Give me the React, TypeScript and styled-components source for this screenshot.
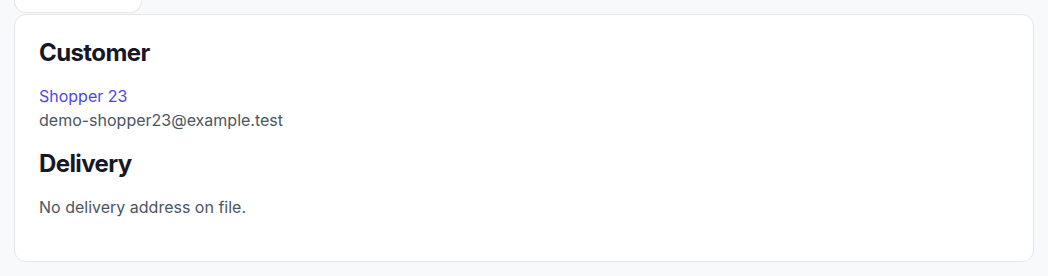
import styled, { createGlobalStyle } from 'styled-components';

const GlobalStyle = createGlobalStyle`
  html, body {
    margin: 0;
    padding: 0;
    background: #f8f9fb;
    font-family: Inter, 'Noto Sans', sans-serif;
    -webkit-font-smoothing: antialiased;
  }
`;

const StyledPage = styled.div`
  display: flex;
  flex-direction: column;
  gap: 1px;
  padding: 0 14px;
`;

const StyledStub = styled.div`
  width: 128px;
  height: 13px;
  box-sizing: border-box;
  background: #ffffff;
  border: 1px solid #e5e7eb;
  border-top: none;
  border-radius: 0 0 12px 12px;
`;

const StyledCard = styled.section`
  display: flex;
  flex-direction: column;
  gap: 18px;
  background: #ffffff;
  border: 1px solid #e5e7eb;
  border-radius: 12px;
  padding: 24px 24px 42px;
`;

const StyledSection = styled.div`
  display: flex;
  flex-direction: column;
  gap: 16px;
  h2 {
    margin: 0;
    font-size: 24px;
    line-height: 1.2;
    font-weight: 700;
    letter-spacing: -0.025em;
    color: #161826;
  }
`;

const StyledDetails = styled.div`
  display: flex;
  flex-direction: column;
  font-size: 16px;
  line-height: 24px;
  color: #4b5563;
  p {
    margin: 0;
  }
  a {
    color: #4f46e5;
    text-decoration: none;
    width: fit-content;
  }
`;

const App = () => {
  return (
    <>
      <GlobalStyle />
      <StyledPage>
        <StyledStub />
        <StyledCard>
          <StyledSection>
            <h2>Customer</h2>
            <StyledDetails>
              <a href='#'>Shopper 23</a>
              <p>demo-shopper23@example.test</p>
            </StyledDetails>
          </StyledSection>
          <StyledSection>
            <h2>Delivery</h2>
            <StyledDetails>
              <p>No delivery address on file.</p>
            </StyledDetails>
          </StyledSection>
        </StyledCard>
      </StyledPage>
    </>
  );
};

export default App;
